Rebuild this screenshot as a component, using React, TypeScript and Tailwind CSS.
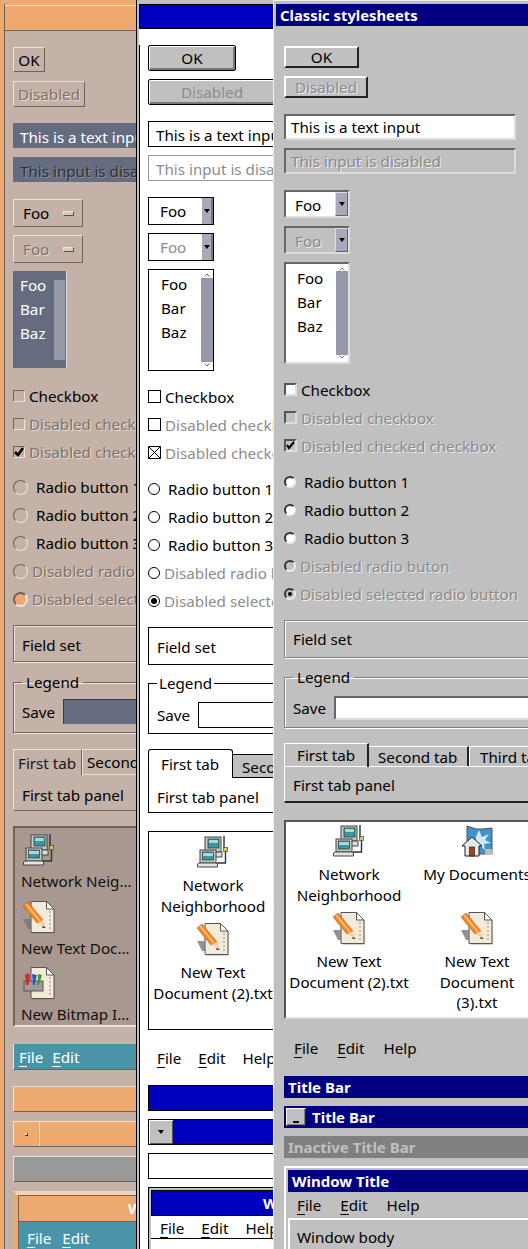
import { type ReactNode } from 'react';

function NetworkIcon() {
  return (
    <svg width="33" height="33" viewBox="0 0 33 33" className="block">
      <path d="M27 0v12M28.500 15v12H20" fill="none" stroke="#333" strokeWidth="1.4" />
      <rect x="26.500" y="11.500" width="4" height="4" fill="#d8c860" stroke="#444" strokeWidth="0.7" />
      <rect x="8" y="1" width="16" height="15" fill="#c4c8c8" stroke="#444" />
      <rect x="11" y="3" width="11" height="9" fill="#3a979c" stroke="#333" strokeWidth="0.7" />
      <path d="M12 4h9v3h-9z" fill="#a9d8d8" />
      <rect x="6" y="16" width="19" height="5" fill="#ddd" stroke="#444" />
      <rect x="3" y="14" width="16" height="13" fill="#c4c8c8" stroke="#444" />
      <rect x="5.500" y="16" width="11" height="8" fill="#3a979c" stroke="#333" strokeWidth="0.7" />
      <path d="M6 17h10v3H6z" fill="#a9d8d8" />
      <path d="M0.500 31V28l2-1h16l2 1v3z" fill="#e4e4e4" stroke="#444" />
    </svg>
  );
}

function PageShape() {
  return (
    <>
      <path d="M9 2h16l7 7v24H9z" fill="#7a7a7a" opacity="0.35" />
      <path d="M8 .5h15.500l7.500 7.500v23.500H8z" fill="#f4ead8" stroke="#555" />
      <path d="M23.500 .5v7.500h7.500z" fill="#fff" stroke="#555" />
      <path d="M27 10v19" stroke="#b8ad98" strokeWidth="1.500" strokeDasharray="2 2" />
    </>
  );
}

function TextDocIcon() {
  return (
    <svg width="33" height="33" viewBox="0 0 33 33" className="block">
      <PageShape />
      <path d="M0 18h8v10H5z" fill="#777" opacity="0.8" />
      <path d="M0 5L5 1l15 18-6 3z" fill="#f08a24" stroke="#b05c14" strokeWidth="0.6" />
      <path d="M3 3l14 17" stroke="#fbc488" strokeWidth="1.500" />
      <path d="M20 19l-6 3 9 5z" fill="#f3cdb4" />
      <path d="M20 25l3 2-4-.5z" fill="#111" />
    </svg>
  );
}

function BitmapIcon() {
  return (
    <svg width="33" height="33" viewBox="0 0 33 33" className="block">
      <PageShape />
      <rect x="1" y="14" width="19" height="10" fill="#9a9a9a" stroke="#555" />
      <path d="M2 8q2.500-3 5 0l-1.500 10h-2z" fill="#d42a22" />
      <path d="M9 7l5 1-2.500 10h-1.500z" fill="#2b55c8" />
      <path d="M15 7l4 1-3 10h-1.500z" fill="#3d9a3a" />
    </svg>
  );
}

function DocsIcon() {
  return (
    <svg width="33" height="33" viewBox="0 0 33 33" className="block">
      <path d="M6 1l9 3h7l9-1v26H6z" fill="#3f94cc" stroke="#555" />
      <path d="M18 5l3 7 7-3-4 6 6 3-7 1 1 6-5-5-4 5V12z" fill="#cfe9f6" />
      <path d="M24 24h7v6h-7z" fill="#bbb" />
      <path d="M1 21L11 12l10 9h-3v10H4V21z" fill="#e8e8e8" stroke="#222" />
      <rect x="8.500" y="22" width="5" height="9" fill="#a8441c" stroke="#222" strokeWidth="0.7" />
    </svg>
  );
}

function Caret({ className = 'border-t-black' }: { className?: string }) {
  return <span className={`block h-0 w-0 border-x-[3px] border-t-[4px] border-x-transparent ${className}`} />;
}

function Chevrons() {
  return (
    <>
      <svg width="6" height="4" viewBox="0 0 6 4" className="absolute left-[3px] top-[3px]">
        <path d="M.5 3.500L3 1l2.500 2.500" fill="none" stroke="#777" />
      </svg>
      <svg width="6" height="4" viewBox="0 0 6 4" className="absolute bottom-[3px] left-[3px]">
        <path d="M.5 .5L3 3 5.500 .5" fill="none" stroke="#777" />
      </svg>
    </>
  );
}

function Cell({ icon, lines, className = '' }: { icon: ReactNode; lines: string[]; className?: string }) {
  return (
    <div className={`flex flex-col items-center ${className}`}>
      {icon}
      <div className="mt-[6px] whitespace-nowrap text-center leading-[20.500px]">
        {lines.map(line => (
          <div key={line}>{line}</div>
        ))}
      </div>
    </div>
  );
}

function U({ children }: { children: ReactNode }) {
  return <span className="underline underline-offset-[3px]">{children}</span>;
}

/* left window, the peach theme */
function PeachWindow() {
  const bevel = 'border border-t-[#efe2da] border-l-[#efe2da] border-r-[#6f6259] border-b-[#6f6259]';
  const muted = 'text-[#7d716b] [text-shadow:1px_1px_0_#e8dcd5]';
  return (
    <div className="absolute left-0 top-0 h-[1249px] w-[137px] overflow-hidden border-r-[1px] border-black bg-[#c4b1a7]">
      <div className="h-[5px] bg-[#eda96e]" />
      <div className="absolute bottom-0 left-0 top-0 w-[4px] bg-[#eda96e]" />
      <div className="absolute bottom-0 left-[4px] top-[4px] w-px bg-[#6f6259]" />
      <div className="ml-[5px] h-[26px] border-y border-t-[#efe2da] border-b-[#6f6259] bg-[#eda96e]" />
      <div className="w-[400px] pl-[13px]">
        <button className={`mt-[16px] flex h-[25px] w-[32px] items-center justify-center ${bevel}`}>OK</button>
        <button className={`mt-[9px] flex h-[26px] w-[72px] items-center justify-center ${bevel} ${muted}`}>Disabled</button>
        <div className="mt-[16px] flex h-[25px] w-[300px] items-center bg-[#666c80] pl-[7px] pt-[2px] text-white">This is a text input</div>
        <div className="mt-[9px] flex h-[25px] w-[300px] items-center bg-[#666c80] pl-[7px] pt-[2px] text-[#2f3238] [text-shadow:1px_1px_0_#8e92a0]">This input is disabled</div>
        <div className={`mt-[17px] flex h-[28px] w-[70px] items-center justify-between pl-[9px] pr-[8px] ${bevel}`}>
          Foo
          <span className="h-[5px] w-[11px] border border-t-[#f0e6de] border-l-[#f0e6de] border-r-[#5c5048] border-b-[#5c5048] bg-[#d8c8bf]" />
        </div>
        <div className={`mt-[8px] flex h-[28px] w-[70px] items-center justify-between pl-[9px] pr-[8px] ${bevel}`}>
          <span className={muted}>Foo</span>
          <span className="h-[5px] w-[11px] border border-t-[#f0e6de] border-l-[#f0e6de] border-r-[#5c5048] border-b-[#5c5048] bg-[#d8c8bf]" />
        </div>
        <div className="relative mt-[8px] h-[97px] w-[54px] border-r border-r-[#d8dce8] bg-[#666c80] pl-[7px] pt-[2px] leading-[24px] text-white">
          <div>Foo</div>
          <div>Bar</div>
          <div>Baz</div>
          <div className="absolute right-px top-[9px] h-[80px] w-[11px] bg-[#9599a5]" />
        </div>
        <div className="mt-[21px] flex h-[14px] items-center gap-[4px]">
          <span className="h-[12px] w-[12px] border border-t-[#6f6259] border-l-[#6f6259] border-r-[#efe2da] border-b-[#efe2da]" />
          Checkbox
        </div>
        <div className={`mt-[14px] flex h-[14px] items-center gap-[4px] ${muted}`}>
          <span className="h-[12px] w-[12px] border border-t-[#6f6259] border-l-[#6f6259] border-r-[#efe2da] border-b-[#efe2da]" />
          Disabled checkbox
        </div>
        <div className={`mt-[14px] flex h-[14px] items-center gap-[4px] ${muted}`}>
          <span className="flex h-[12px] w-[12px] items-center justify-center border border-t-[#6f6259] border-l-[#6f6259] border-r-[#efe2da] border-b-[#efe2da]">
            <svg width="10" height="10" viewBox="0 0 10 10"><path d="M1 5l3 3 5-7" fill="none" stroke="#000" strokeWidth="2.500" /></svg>
          </span>
          Disabled checked checkbox
        </div>
        {['Radio button 1', 'Radio button 2', 'Radio button 3'].map((label, i) => (
          <div key={label} className={`flex h-[16px] items-center gap-[8px] ${i === 0 ? 'mt-[20px]' : 'mt-[12px]'}`}>
            <span className="h-[15px] w-[15px] rounded-full border border-t-[#6f6259] border-l-[#6f6259] border-r-[#efe2da] border-b-[#efe2da]" />
            {label}
          </div>
        ))}
        <div className={`mt-[12px] flex h-[16px] items-center gap-[4px] ${muted}`}>
          <span className="h-[15px] w-[15px] rounded-full border border-t-[#6f6259] border-l-[#6f6259] border-r-[#efe2da] border-b-[#efe2da]" />
          Disabled radio button
        </div>
        <div className={`mt-[12px] flex h-[16px] items-center gap-[4px] ${muted}`}>
          <span className="h-[15px] w-[15px] rounded-full border-2 border-t-[#6f6259] border-l-[#6f6259] border-r-[#efe2da] border-b-[#efe2da] bg-[#eda96e]" />
          Disabled selected radio button
        </div>
        <div className="mt-[18px] flex h-[37px] w-[400px] items-center border border-[#6f6259] pl-[8px] pt-[2px] shadow-[inset_1px_1px_0_#efe2da,1px_1px_0_#efe2da]">Field set</div>
        <fieldset className="mt-[9px] h-[62px] w-[400px] border border-[#6f6259] pl-[8px] shadow-[inset_1px_1px_0_#efe2da,1px_1px_0_#efe2da]">
          <legend className="px-[4px] leading-[22px]">Legend</legend>
          <div className="mt-[6px] flex h-[25px] items-center gap-[8px]">
            Save
            <span className="h-[25px] w-[300px] border-l border-t border-[#3d3a3a] bg-[#666c80]" />
          </div>
        </fieldset>
        <div className="mt-[16px] w-[400px]">
          <div className="flex h-[26px]">
            <div className="flex w-[69px] items-center border-l border-r border-t border-l-[#efe2da] border-r-[#6f6259] border-t-[#efe2da] pl-[4px] pt-[2px] leading-none text-[#111827]">First tab</div>
            <div className="flex w-[100px] items-center border-l border-t border-l-[#efe2da] border-t-[#efe2da] border-b border-b-[#efe2da] pl-[4px] pt-[2px] leading-none">Second tab</div>
          </div>
          <div className="flex h-[36px] items-center border-b border-l border-b-[#6f6259] border-l-[#efe2da] pl-[8px] pt-[4px]">First tab panel</div>
        </div>
        <div className="mt-[15px] h-[201px] w-[400px] border-b-2 border-l-2 border-t-2 border-b-[#efe2da] border-l-[#6f6259] border-t-[#6f6259] bg-[#a8988f] pl-[6px] pt-[6px] text-[#111]">
          {[
            { icon: <NetworkIcon />, label: 'Network Neighborhood' },
            { icon: <TextDocIcon />, label: 'New Text Document (2).txt' },
            { icon: <BitmapIcon />, label: 'New Bitmap Image.bmp' },
          ].map(item => (
            <div key={item.label} className="h-[66.500px]">
              <div className="ml-[2px]">{item.icon}</div>
              <div className="mt-[3px] w-[115px] truncate leading-[22px]">{item.label}</div>
            </div>
          ))}
        </div>
        <div className="mt-[17px] flex h-[26px] w-[400px] items-center gap-[9px] border-b border-l border-b-[#6f6259] border-l-[#efe2da] bg-[#4a94aa] pl-[5px] text-white">
          <span><U>F</U>ile</span>
          <span><U>E</U>dit</span>
        </div>
        <div className={`mt-[16px] h-[26px] w-[400px] bg-[#eda96e] ${bevel}`} />
        <div className={`mt-[9px] flex h-[26px] w-[400px] items-center bg-[#eda96e] ${bevel}`}>
          <span className="flex h-full w-[26px] items-center justify-center border-r border-r-[#efe2da]">
            <span className="block h-[3px] w-[3px] border-b border-r border-b-[#333] border-r-[#333] bg-white" />
          </span>
        </div>
        <div className={`mt-[9px] h-[26px] w-[400px] bg-[#999] ${bevel}`} />
        <div className="mt-[9px] w-[400px] border-l-[4px] border-t-[4px] border-l-[#eda96e] border-t-[#efd6bf] bg-[#eda96e] pl-px">
          <div className="relative h-[26px] border-l border-t border-[#6f6259]">
            <span className="absolute left-[109px] top-[1px] text-[15px] font-bold text-white">W</span>
          </div>
          <div className="flex h-[32px] items-center gap-[11px] border-l border-t border-[#6f6259] bg-[#4a94aa] pl-[8px] pt-[1px] text-white">
            <span><U>F</U>ile</span>
            <span><U>E</U>dit</span>
          </div>
        </div>
      </div>
    </div>
  );
}

/* middle window, the white theme */
function WhiteWindow() {
  const muted = 'text-[#8c8c8c]';
  const arrow = 'flex h-full w-[12px] items-center justify-center border-l border-r-2 border-y border-l-white border-r-[#777] border-y-[#a8aabb] bg-[#a8aabb]';
  return (
    <div className="absolute left-[137px] top-0 h-[1249px] w-[136px] overflow-hidden border-l-[2px] border-[#c0c0c0] bg-white">
      <div className="h-[4px] bg-[#c0c0c0]" />
      <div className="h-[25px] border-y border-l border-black bg-[#0000bd]" />
      <div className="w-[400px] border-l border-black pl-[8px]">
        <button className="mt-[16px] flex h-[26px] w-[88px] items-center justify-center rounded-[2px] border border-black bg-[#c0c0c0] shadow-[inset_1px_1px_0_#fff,inset_-2px_-2px_0_#777]">OK</button>
        <button className={`mt-[8px] flex h-[26px] w-[128px] items-center justify-center rounded-[2px] border border-black bg-[#c0c0c0] shadow-[inset_1px_1px_0_#fff,inset_-2px_-2px_0_#777] ${muted}`}>Disabled</button>
        <div className="mt-[16px] flex h-[26px] w-[300px] items-center border border-black pl-[7px] pt-[2px]">This is a text input</div>
        <div className={`mt-[8px] flex h-[26px] w-[300px] items-center border border-[#999] pl-[7px] pt-[2px] ${muted}`}>This input is disabled</div>
        <div className="mt-[16px] flex h-[28px] w-[66px] items-center justify-between border border-black pl-[11px]">
          Foo
          <span className={arrow}><Caret /></span>
        </div>
        <div className="mt-[8px] flex h-[28px] w-[66px] items-center justify-between border border-black pl-[11px]">
          <span className={muted}>Foo</span>
          <span className={arrow}><Caret /></span>
        </div>
        <div className="relative mt-[8px] h-[102px] w-[66px] border border-black pl-[12px] pt-[2px] leading-[24px]">
          <div>Foo</div>
          <div>Bar</div>
          <div>Baz</div>
          <div className="absolute bottom-0 right-0 top-0 w-[12px]">
            <Chevrons />
            <div className="mt-[8px] h-[84px] bg-[#9599a8]" />
          </div>
        </div>
        <div className="mt-[19px] flex h-[13px] items-center gap-[4px]">
          <span className="h-[13px] w-[13px] border border-black" />
          Checkbox
        </div>
        <div className={`mt-[15px] flex h-[13px] items-center gap-[4px] ${muted}`}>
          <span className="h-[13px] w-[13px] border border-black" />
          Disabled checkbox
        </div>
        <div className={`mt-[15px] flex h-[13px] items-center gap-[4px] ${muted}`}>
          <svg width="13" height="13" viewBox="0 0 13 13" className="shrink-0"><path d="M.5 .5h12v12H.5zM1 1l11 11M12 1L1 12" fill="none" stroke="#000" /></svg>
          Disabled checked checkbox
        </div>
        {['Radio button 1', 'Radio button 2', 'Radio button 3'].map((label, i) => (
          <div key={label} className={`flex h-[12px] items-center gap-[8px] ${i === 0 ? 'mt-[24px]' : 'mt-[16px]'}`}>
            <span className="h-[12px] w-[12px] rounded-full border border-black" />
            {label}
          </div>
        ))}
        <div className={`mt-[16px] flex h-[12px] items-center gap-[4px] ${muted}`}>
          <span className="h-[12px] w-[12px] rounded-full border border-black" />
          Disabled radio button
        </div>
        <div className={`mt-[16px] flex h-[12px] items-center gap-[4px] ${muted}`}>
          <span className="flex h-[12px] w-[12px] items-center justify-center rounded-full border border-black">
            <span className="h-[6px] w-[6px] rounded-full bg-black" />
          </span>
          Disabled selected radio button
        </div>
        <div className="mt-[20px] flex h-[38px] w-[400px] items-center border border-black pl-[8px] pt-[2px]">Field set</div>
        <fieldset className="mt-[7px] h-[62px] w-[400px] border border-black pl-[8px]">
          <legend className="px-[2px] leading-[22px]">Legend</legend>
          <div className="mt-[8px] flex h-[26px] items-center gap-[8px]">
            Save
            <span className="h-[26px] w-[300px] border border-black" />
          </div>
        </fieldset>
        <div className="mt-[15px] w-[400px]">
          <div className="flex h-[28px] items-end">
            <div className="relative z-10 -mb-px flex h-[29px] w-[85px] items-start rounded-t-[3px] border-x border-t border-black bg-white pl-[12px] pt-[3px]">First tab</div>
            <div className="flex h-[23px] w-[100px] items-center border-r border-t border-black bg-[#c0c0c0] pl-[9px] pt-[2px]">Second tab</div>
          </div>
          <div className="flex h-[36px] items-center border-x border-b border-t border-black pl-[8px] pt-[3px]">First tab panel</div>
        </div>
        <div className="mt-[18px] grid h-[199px] w-[400px] grid-cols-[128px_130px] content-start border border-black pt-[4px]">
          <Cell icon={<NetworkIcon />} lines={['Network', 'Neighborhood']} className="h-[87px]" />
          <Cell icon={<DocsIcon />} lines={['My Documents']} className="h-[87px]" />
          <Cell icon={<TextDocIcon />} lines={['New Text', 'Document (2).txt']} />
          <Cell icon={<TextDocIcon />} lines={['New Text', 'Document', '(3).txt']} />
        </div>
        <div className="mt-[17px] flex h-[22px] items-center gap-[17px] pl-[9px]">
          <span><U>F</U>ile</span>
          <span><U>E</U>dit</span>
          <span>Help</span>
        </div>
        <div className="mt-[16px] h-[26px] w-[400px] border border-black bg-[#0000bd]" />
        <div className="mt-[8px] flex h-[26px] w-[400px] border border-black bg-[#0000bd]">
          <span className="flex h-full w-[24px] items-center justify-center bg-[#c0c0c0] shadow-[inset_1px_1px_0_#fff,inset_-1px_-1px_0_#555]">
            <Caret />
          </span>
        </div>
        <div className="mt-[8px] h-[26px] w-[400px] border border-black bg-white" />
        <div className="mt-[8px] w-[400px] border border-black bg-[#c0c0c0] pl-[2px] pt-[2px]">
          <div className="relative h-[26px] border border-black bg-[#0000bd]">
            <span className="absolute left-[111px] top-[1px] text-[15px] font-bold text-white">W</span>
          </div>
          <div className="flex h-[22px] items-center gap-[17px] bg-white pl-[9px] pt-[2px]">
            <span><U>F</U>ile</span>
            <span><U>E</U>dit</span>
            <span>Help</span>
          </div>
          <div className="h-[40px] border-t border-black bg-white" />
        </div>
      </div>
    </div>
  );
}

/* right window, the classic grey theme */
function ClassicWindow() {
  const raised = 'border-2 border-t-white border-l-white border-r-[#222] border-b-[#222] bg-[#c0c0c0]';
  const sunken = 'border-2 border-t-[#666] border-l-[#666] border-r-[#ddd] border-b-[#ddd]';
  const muted = 'text-[#8a8a8a] [text-shadow:1px_1px_0_#eee]';
  const box = 'shrink-0 border-2 border-t-[#555] border-l-[#555] border-r-[#ddd] border-b-[#ddd]';
  const arrow = 'flex h-full w-[13px] items-center justify-center border border-t-[#ddd] border-l-[#ddd] border-r-[#666] border-b-[#666] bg-[#a8aabb]';
  const groove = 'border border-[#808080] shadow-[inset_1px_1px_0_#fff,1px_1px_0_#fff]';
  const title = 'flex h-[22px] w-[400px] items-center bg-[#000080] text-[15px] font-bold text-white';
  return (
    <div className="absolute left-[273px] top-0 h-[1249px] w-[255px] overflow-hidden border-l border-t border-l-[#eee] border-t-[#eee] bg-[#c0c0c0] pl-[2px] pt-[3px]">
      <div className="flex h-[22px] w-[400px] items-center bg-[#000080] pl-[4px] text-[14.800px] font-bold text-white">Classic stylesheets</div>
      <div className="w-[400px] pl-[8px]">
        <button className={`mt-[20px] flex h-[22px] w-[75px] items-center justify-center ${raised}`}>OK</button>
        <button className={`mt-[8px] flex h-[22px] w-[84px] items-center justify-center ${raised} ${muted}`}>Disabled</button>
        <div className={`mt-[16px] flex h-[26px] w-[232px] items-center bg-white pl-[5px] ${sunken}`}>This is a text input</div>
        <div className={`mt-[8px] flex h-[26px] w-[232px] items-center pl-[5px] ${sunken} ${muted}`}>This input is disabled</div>
        <div className={`mt-[16px] flex h-[28px] w-[66px] items-center justify-between bg-white pl-[9px] ${sunken}`}>
          <span className="pt-[2px]">Foo</span>
          <span className={arrow}><Caret /></span>
        </div>
        <div className={`mt-[8px] flex h-[28px] w-[66px] items-center justify-between pl-[9px] ${sunken}`}>
          <span className={`pt-[2px] ${muted}`}>Foo</span>
          <span className={arrow}><Caret /></span>
        </div>
        <div className={`relative mt-[8px] h-[102px] w-[66px] bg-white pl-[11px] pt-[2px] leading-[24px] ${sunken}`}>
          <div>Foo</div>
          <div>Bar</div>
          <div>Baz</div>
          <div className="absolute bottom-0 right-0 top-0 w-[12px]">
            <Chevrons />
            <div className="mt-[7px] h-[84px] bg-[#9599a8]" />
          </div>
        </div>
        <div className="mt-[19px] flex h-[13px] items-center gap-[4px]">
          <span className={`h-[13px] w-[13px] bg-white ${box}`} />
          Checkbox
        </div>
        <div className={`mt-[15px] flex h-[13px] items-center gap-[4px] ${muted}`}>
          <span className={`h-[13px] w-[13px] ${box}`} />
          Disabled checkbox
        </div>
        <div className={`mt-[15px] flex h-[13px] items-center gap-[4px] ${muted}`}>
          <span className={`flex h-[13px] w-[13px] items-center justify-center ${box}`}>
            <svg width="9" height="9" viewBox="0 0 9 9"><path d="M1 4l2 3 5-6" fill="none" stroke="#000" strokeWidth="2" /></svg>
          </span>
          Disabled checked checkbox
        </div>
        {['Radio button 1', 'Radio button 2', 'Radio button 3'].map((label, i) => (
          <div key={label} className={`flex h-[12px] items-center gap-[8px] ${i === 0 ? 'mt-[24px]' : 'mt-[16px]'}`}>
            <span className="h-[12px] w-[12px] rounded-full border-2 border-t-[#333] border-l-[#333] border-r-[#eee] border-b-[#eee] bg-white" />
            {label}
          </div>
        ))}
        <div className={`mt-[16px] flex h-[12px] items-center gap-[4px] ${muted}`}>
          <span className="h-[12px] w-[12px] rounded-full border-2 border-t-[#333] border-l-[#333] border-r-[#eee] border-b-[#eee]" />
          Disabled radio buton
        </div>
        <div className={`mt-[16px] flex h-[12px] items-center gap-[4px] ${muted}`}>
          <span className="flex h-[12px] w-[12px] items-center justify-center rounded-full border-2 border-t-[#333] border-l-[#333] border-r-[#eee] border-b-[#eee]">
            <span className="h-[4px] w-[4px] rounded-full bg-black" />
          </span>
          Disabled selected radio button
        </div>
        <div className={`mt-[20px] flex h-[38px] w-[400px] items-center pl-[8px] ${groove}`}>Field set</div>
        <fieldset className={`mt-[8px] h-[62px] w-[400px] pl-[8px] ${groove}`}>
          <legend className="px-[4px] leading-[22px]">Legend</legend>
          <div className="mt-[8px] flex h-[24px] items-center gap-[8px]">
            Save
            <span className={`h-[24px] w-[300px] bg-white ${sunken}`} />
          </div>
        </fieldset>
        <div className="mt-[15px] w-[400px]">
          <div className="flex h-[23px] items-end">
            <div className="relative z-10 -mb-px flex h-[24px] w-[85px] items-center border-l border-r-2 border-t border-l-white border-r-[#222] border-t-white pb-[2px] pl-[12px]">First tab</div>
            <div className="flex h-[20px] w-[100px] items-center border-r-2 border-t border-r-[#222] border-t-white pl-[9px]">Second tab</div>
            <div className="flex h-[20px] w-[100px] items-center border-l border-t border-l-white border-t-white pl-[10px]">Third tab</div>
          </div>
          <div className="flex h-[37px] items-center border-b-2 border-l border-t border-b-[#222] border-l-white border-t-white pl-[8px] pt-[2px]">First tab panel</div>
        </div>
        <div className="mt-[17px] grid h-[199px] w-[400px] grid-cols-[126px_130px] content-start border-2 border-b-[#ddd] border-l-[#555] border-r-[#ddd] border-t-[#555] bg-white pt-[3px]">
          <Cell icon={<NetworkIcon />} lines={['Network', 'Neighborhood']} className="h-[87px]" />
          <Cell icon={<DocsIcon />} lines={['My Documents']} className="h-[87px]" />
          <Cell icon={<TextDocIcon />} lines={['New Text', 'Document (2).txt']} />
          <Cell icon={<TextDocIcon />} lines={['New Text', 'Document', '(3).txt']} />
        </div>
        <div className="mt-[18px] flex h-[22px] items-center gap-[19px] pl-[10px]">
          <span><U>F</U>ile</span>
          <span><U>E</U>dit</span>
          <span>Help</span>
        </div>
        <div className={`mt-[17px] pl-[4px] ${title}`}>Title Bar</div>
        <div className={`mt-[8px] gap-[6px] pl-[2px] ${title}`}>
          <span className="flex h-[18px] w-[20px] items-end justify-center border border-t-white border-l-white border-r-[#222] border-b-[#222] bg-[#c0c0c0] pb-[2px] shadow-[inset_-1px_-1px_0_#808080]">
            <span className="h-[2px] w-[6px] bg-black" />
          </span>
          Title Bar
        </div>
        <div className="mt-[8px] flex h-[22px] w-[400px] items-center bg-[#808080] pl-[4px] text-[15px] font-bold text-[#c0c0c0]">Inactive Title Bar</div>
        <div className="mt-[8px] w-[400px] border-l-2 border-t-2 border-l-white border-t-white bg-[#c0c0c0] pl-[2px] pt-[2px]">
          <div className={`pl-[4px] ${title}`}>Window Title</div>
          <div className="flex h-[26px] items-center gap-[19px] pl-[9px]">
            <span><U>F</U>ile</span>
            <span><U>E</U>dit</span>
            <span>Help</span>
          </div>
          <div className="flex h-[40px] items-start border-l-2 border-t-2 border-l-white border-t-white pl-[7px] pt-[6px]">Window body</div>
        </div>
      </div>
    </div>
  );
}

export default function App() {
  return (
    <div className="relative h-[1249px] w-[528px] overflow-hidden bg-[#c0c0c0] font-['Noto_Sans',sans-serif] text-[15.200px] leading-[22px] text-black">
      <PeachWindow />
      <WhiteWindow />
      <ClassicWindow />
    </div>
  );
}
